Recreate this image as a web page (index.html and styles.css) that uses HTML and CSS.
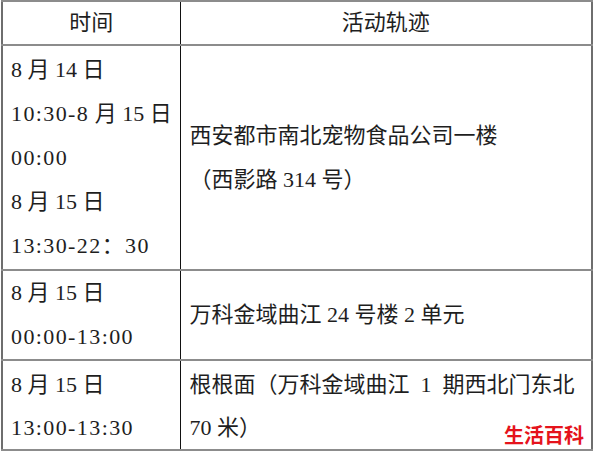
FILE: index.html
```html
<!DOCTYPE html>
<html lang="zh-CN">
<head>
<meta charset="utf-8">
<title>活动轨迹</title>
<link rel="stylesheet" href="styles.css">
</head>
<body>
<div class="page">
  <table class="track">
    <colgroup>
      <col class="col-time">
      <col class="col-place">
    </colgroup>
    <thead>
      <tr class="head">
        <th class="c-time">时间</th>
        <th class="c-place">活动轨迹</th>
      </tr>
    </thead>
    <tbody>
      <tr class="r1">
        <td class="c-time">8 月 14 日<br><span class="tm">10:30-8</span> 月 15 日<br><span class="tm">00:00</span><br>8 月 15 日<br><span class="tm">13:30-22：30</span></td>
        <td class="c-place">西安都市南北宠物食品公司一楼<br>（西影路 314 号）</td>
      </tr>
      <tr class="r2">
        <td class="c-time">8 月 15 日<br><span class="tm">00:00-13:00</span></td>
        <td class="c-place">万科金域曲江 24 号楼 2 单元</td>
      </tr>
      <tr class="r3">
        <td class="c-time">8 月 15 日<br><span class="tm">13:00-13:30</span></td>
        <td class="c-place">根根面（万科金域曲江 &nbsp;1 &nbsp;期西北门东北<br>70 米）</td>
      </tr>
    </tbody>
  </table>
  <div class="mark">生活百科</div>
</div>
</body>
</html>
```
FILE: styles.css
```css
html, body {
  margin: 0;
  padding: 0;
  background: #ffffff;
}

.page {
  position: relative;
  width: 594px;
  height: 451px;
  overflow: hidden;
}

.track {
  border-collapse: collapse;
  table-layout: fixed;
  width: 592px;
  margin: 0 0 0 1px;
  font-family: "Liberation Serif", "Noto Sans CJK SC", serif;
  font-size: 22px;
  color: #1e1e1e;
  border: 2px solid #6e6e6e;
}

.col-time {
  width: 178px;
}

.track th,
.track td {
  padding: 0;
  line-height: 44px;
  vertical-align: middle;
  white-space: nowrap;
  border-top: 2px solid #8c8c8c;
  border-bottom: 2px solid #8c8c8c;
  font-weight: normal;
}

.track .c-time {
  padding-left: 8px;
  border-right: 1px solid #111111;
}

.track .c-place {
  padding-left: 9px;
}

.track th.c-time,
.track th.c-place {
  text-align: center;
  padding-left: 0;
  line-height: 40px;
}

.head {
  height: 44px;
}

.r1 {
  height: 225px;
}

.r2 {
  height: 90px;
}

.r3 {
  height: 88px;
}

.r3 td {
  line-height: 43px;
  padding-top: 2px;
}

.tm {
  letter-spacing: 1.4px;
}

.mark {
  position: absolute;
  right: 10px;
  bottom: 5px;
  font-family: "Noto Sans CJK SC", sans-serif;
  font-weight: 700;
  font-size: 20px;
  line-height: 22px;
  color: #e5131c;
  background: #ffffff;
}
```
